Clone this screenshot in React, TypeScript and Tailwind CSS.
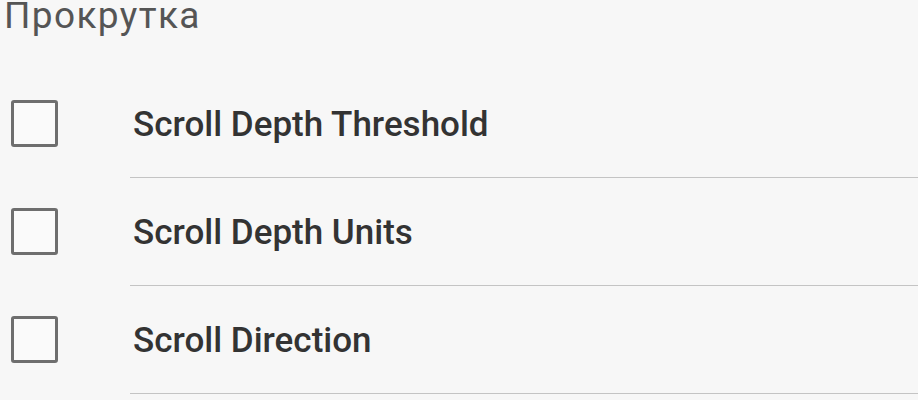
import React from 'react';

const items = ['Scroll Depth Threshold', 'Scroll Depth Units', 'Scroll Direction'];

function App() {
  return (
    <div className="w-[918px] h-[400px] overflow-hidden bg-[#f7f7f7] font-['Roboto',sans-serif]">
      {/* Section title */}
      <div className="h-[70px] pl-[4px]">
        <h2 className="text-[37px] leading-[31px] tracking-[1.4px] text-[#555] font-normal">Прокрутка</h2>
      </div>

      {/* Checkbox rows */}
      {items.map((label) => (
        <div key={label} className="flex h-[108px]">
          <div className="w-[130px] shrink-0 flex items-center pl-[11px] pb-[1px]">
            <div className="w-[47px] h-[47px] border-[3px] border-[#6e6e6e] rounded-[3px] bg-[#fafafa]" />
          </div>
          <div className="flex-1 flex items-center border-b border-[#c4c4c4] pl-[3px] pt-[3px]">
            <span className="text-[35px] font-medium text-[#333]">{label}</span>
          </div>
        </div>
      ))}
    </div>
  );
}

export default App;
